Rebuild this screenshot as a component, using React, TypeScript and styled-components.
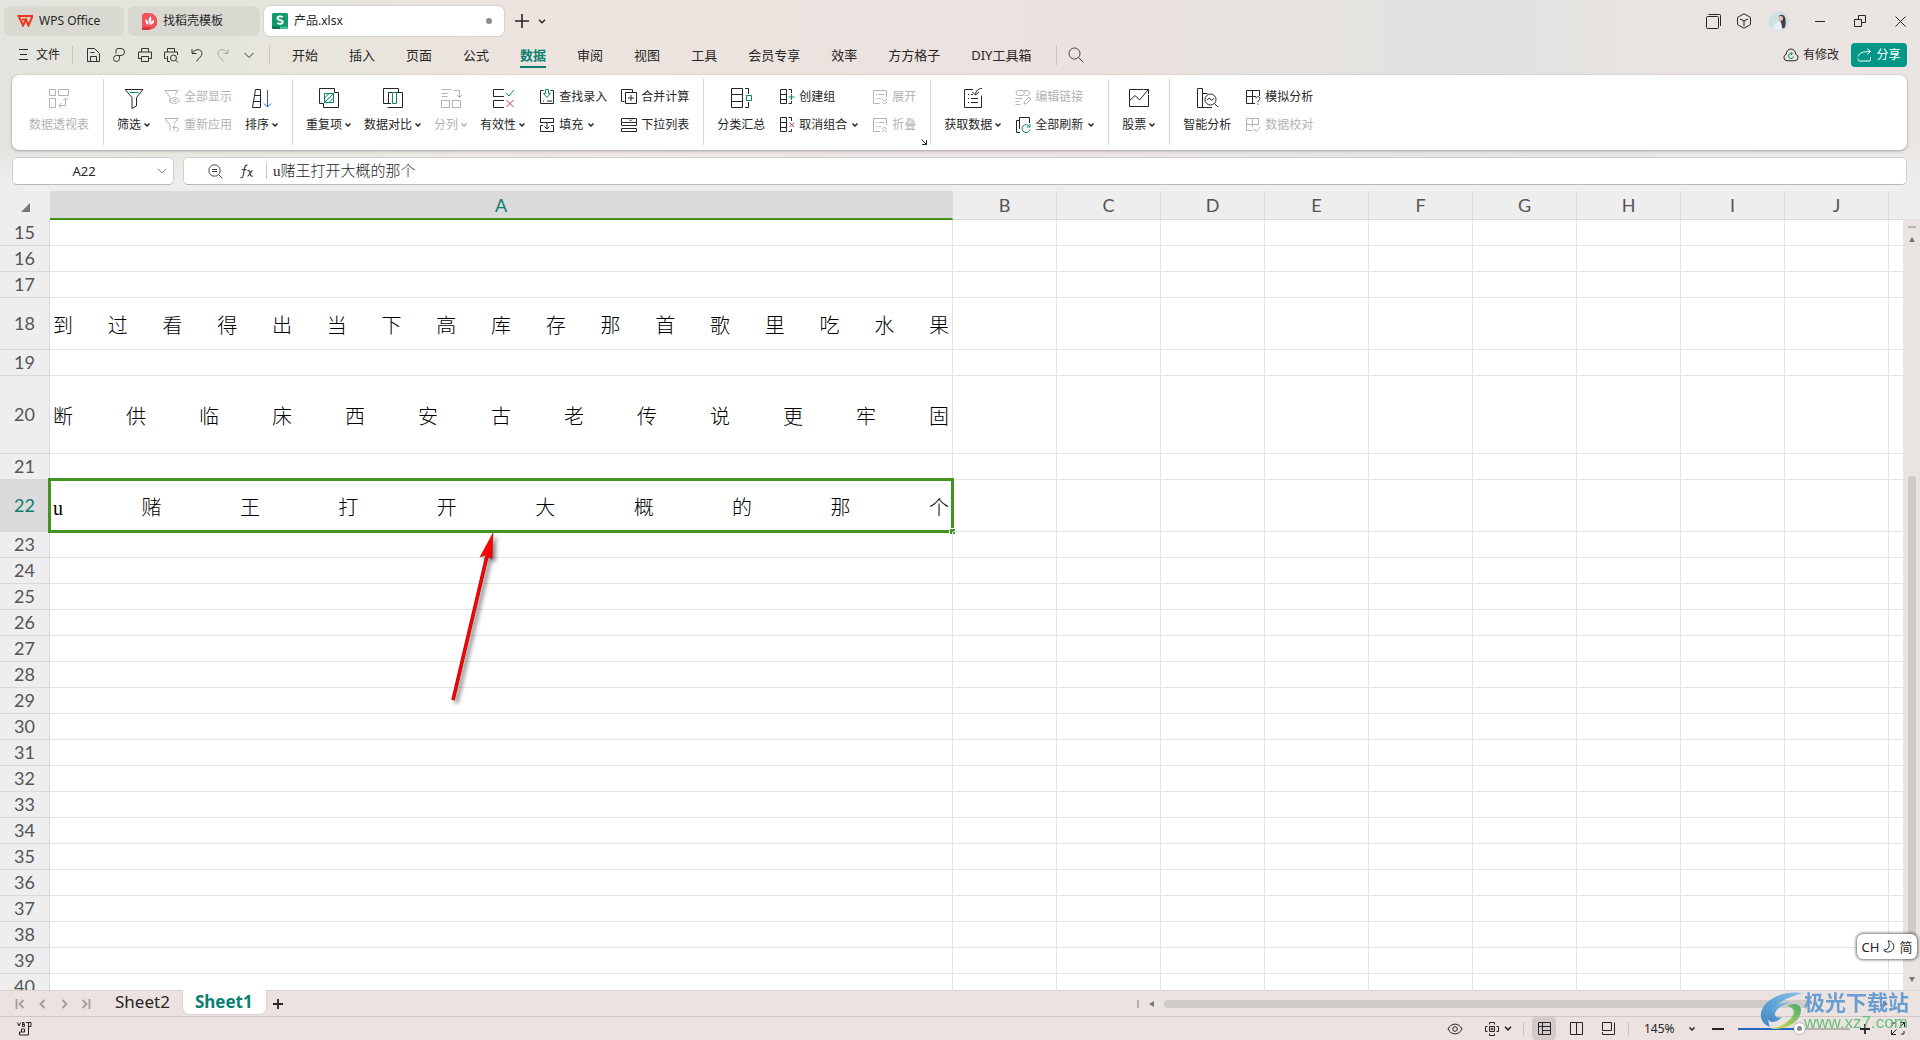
import React, { useState } from "react";
import styled, { createGlobalStyle, css } from "styled-components";

const ui = `"Noto Sans", "Noto Sans CJK SC", sans-serif`;
const green = "#0a8070";

const Global = createGlobalStyle`
  *, *::before, *::after { box-sizing: border-box; }
  body { margin: 0; font-family: ${ui}; font-size: 12px; line-height: 16px; color: #262626; }
  button, input, select { font: inherit; color: inherit; background: none; border: 0; padding: 0; margin: 0; outline: 0; }
`;

/* ---------- frame ---------- */

const Shell = styled.div`
  position: relative;
  display: flex;
  flex-direction: column;
  height: 100vh;
  overflow: hidden;
  background: #ece2e0;
`;

const Head = styled.header`
  display: flex;
  flex-direction: column;
  padding-bottom: 6px;
  background: linear-gradient(180deg, rgba(238, 238, 238, 0) 74%, #eeeeee 98%),
    linear-gradient(90deg, #e4e3de 0, #e5e5db 9%, #e8e5dc 18%, #ede4df 27%, #ece2df 45%, #ece1df 57%, #e8e3e0 63%, #e2e2e0 78%, #e9e4e1 87%, #eae5e2 100%);
`;

const Icon = styled.svg`
  flex: none;
  display: block;
  fill: none;
  stroke: currentColor;
  stroke-width: 1;
`;

const IconButton = styled.button<{ $w?: number; $tone?: string }>`
  flex: none;
  display: flex;
  align-items: center;
  justify-content: center;
  width: ${(p) => p.$w ?? 26}px;
  height: 26px;
  color: ${(p) => p.$tone ?? "#262626"};
`;

/* ---------- title bar ---------- */

const TitleBar = styled.div`
  display: flex;
  align-items: center;
  height: 37px;
  padding: 6px 0 1px 4px;
`;

const FileTab = styled.button<{ $w: number; $pad: number; $active?: boolean }>`
  flex: none;
  display: flex;
  align-items: center;
  gap: 6px;
  width: ${(p) => p.$w}px;
  height: 30px;
  margin-right: 4px;
  padding: 0 12px 0 ${(p) => p.$pad}px;
  border-radius: 6px;
  background: ${(p) => (p.$active ? "#fff" : "#d9d9d2")};
  box-shadow: ${(p) => (p.$active ? "0 0 2px rgba(0,0,0,.25)" : "none")};
`;

const Dirty = styled.span`
  width: 6px;
  height: 6px;
  margin-left: auto;
  border-radius: 50%;
  background: #8c8c8c;
`;

const WindowButtons = styled.div`
  display: flex;
  align-items: center;
  margin-left: auto;
`;

/* ---------- menu ---------- */

const MenuBar = styled.div`
  display: flex;
  align-items: center;
  height: 38px;
  padding: 0 13px 2px 19px;
`;

const FileMenu = styled.button`
  display: flex;
  align-items: center;
  gap: 8px;
  margin-right: 12px;
`;

const Divider = styled.span<{ $h?: number }>`
  flex: none;
  width: 1px;
  height: ${(p) => p.$h ?? 18}px;
  background: #c9c4bf;
`;

const QuickTools = styled.div`
  display: flex;
  align-items: center;
  padding: 0 7px;
`;

const MenuTabs = styled.nav`
  display: flex;
  align-items: center;
  gap: 31px;
  padding: 0 25px 0 22px;
`;

const MenuTab = styled.button<{ $active?: boolean }>`
  flex: none;
  height: 26px;
  padding-top: 2px;
  font-size: 13px;
  white-space: nowrap;
  border-bottom: 2px solid ${(p) => (p.$active ? green : "transparent")};
  ${(p) => p.$active && css`color: ${green}; font-weight: 700;`}
`;

const MenuRight = styled.div`
  display: flex;
  align-items: center;
  gap: 12px;
  margin-left: auto;
`;

const Modified = styled.button`
  display: flex;
  align-items: center;
  gap: 4px;
`;

const Share = styled.button`
  display: flex;
  align-items: center;
  justify-content: center;
  gap: 4px;
  width: 56px;
  height: 24px;
  border-radius: 4px;
  color: #fff;
  background: #009688;
`;

/* ---------- ribbon ---------- */

const Ribbon = styled.div`
  display: flex;
  height: 75px;
  margin: 0 13px 0 12px;
  padding: 4px 0 5px 4px;
  border-radius: 7px;
  background: #fff;
  box-shadow: 0 1px 3px rgba(0, 0, 0, 0.28), 0 0 1px rgba(0, 0, 0, 0.3);
`;

const Group = styled.div`
  position: relative;
  flex: none;
  display: flex;
  gap: 13px;
  padding: 0 14px 0 13px;
  border-right: 1px solid #d6d6d6;
  &:last-child { border-right: 0; }
`;

const Large = styled.button<{ $off?: boolean }>`
  display: flex;
  flex-direction: column;
  align-items: center;
  gap: 7px;
  padding-top: 7px;
  white-space: nowrap;
  color: ${(p) => (p.$off ? "#b3b3b3" : "#262626")};
`;

const Label = styled.span<{ $gap?: number }>`
  display: flex;
  align-items: center;
  gap: ${(p) => p.$gap ?? 3}px;
`;

const Stack = styled.div`
  display: flex;
  flex-direction: column;
  padding: 4px 0 0 1px;
`;

const Small = styled.button<{ $off?: boolean }>`
  display: flex;
  align-items: center;
  gap: 4px;
  height: 28px;
  white-space: nowrap;
  color: ${(p) => (p.$off ? "#b3b3b3" : "#262626")};
`;

const Launcher = styled.button`
  position: absolute;
  right: 3px;
  bottom: 0;
`;

/* ---------- formula bar ---------- */

const FormulaRow = styled.div`
  display: flex;
  gap: 9px;
  padding: 7px 13px 0 12px;
`;

const NameBox = styled.div`
  flex: 0 0 162px;
  min-width: 0;
  display: flex;
  align-items: center;
  height: 28px;
  padding-right: 4px;
  border: 1px solid #d3d1cf;
  border-bottom-color: #b9b8b6;
  border-radius: 5px;
  background: #fff;
`;

const FormulaBox = styled(NameBox)`
  flex: 1;
  padding-left: 10px;
`;

const FormulaDivider = styled(Divider)`
  margin-left: 10px;
`;

const NameInput = styled.input`
  flex: 1;
  min-width: 0;
  text-align: center;
  font-size: 13px;
`;

const FormulaInput = styled.input`
  flex: 1;
  height: 24px;
  padding: 0 8px 3px 6px;
  font-size: 15px;
  font-family: "Liberation Serif", "Noto Sans CJK SC", serif;
  font-weight: 300;
`;

/* ---------- grid ---------- */

const GridArea = styled.main`
  position: relative;
  flex: 1;
  min-height: 0;
  display: flex;
  background: #eeeeee;
`;

const GridClip = styled.div`
  flex: 1;
  min-width: 0;
  overflow: hidden;
`;

const Sheet = styled.table`
  width: 100%;
  table-layout: fixed;
  border-collapse: separate;
  border-spacing: 0;
  background: #fff;
`;

const Col = styled.col<{ $w?: number }>`
  width: ${(p) => (p.$w ? `${p.$w}px` : "auto")};
`;

const HeadCell = styled.th<{ $on?: boolean }>`
  height: 29px;
  padding: 0;
  font: 400 18px/24px Lato, sans-serif;
  color: ${(p) => (p.$on ? green : "#555")};
  background: ${(p) => (p.$on ? "#dbdbdb" : "#eee")};
  border-right: 1px solid #d9d9d9;
  border-bottom: ${(p) => (p.$on ? "2px solid #43931f" : "1px solid #d9d9d9")};
  &:first-child { border-color: transparent; }
  &:last-child { border-right: 0; }
`;

const CornerMark = styled(Icon)`
  margin: 4px 0 0 21px;
`;

const RowHead = styled.th<{ $h: number; $on?: boolean }>`
  height: ${(p) => p.$h}px;
  padding: 0 0 2px;
  font: 400 18px/20px Lato, sans-serif;
  color: ${(p) => (p.$on ? green : "#555")};
  background: ${(p) => (p.$on ? "#dbdbdb" : "#eee")};
  border-right: 1px solid #d9d9d9;
  border-bottom: 1px solid #d9d9d9;
`;

const Cell = styled.td<{ $on?: boolean }>`
  position: relative;
  padding: 4px 3px 0;
  border-right: 1px solid #e3e3e3;
  border-bottom: 1px solid #e3e3e3;
  font: 300 20px/20px "Liberation Serif", "Noto Sans CJK SC", serif;
  color: #000;
  text-align: justify;
  text-align-last: justify;
  &:last-child { border-right: 0; }
  ${(p) =>
    p.$on &&
    css`
      &::before {
        content: "";
        position: absolute;
        inset: -2px;
        border: 3px solid #43931f;
      }
      &::after {
        content: "";
        position: absolute;
        right: -4px;
        bottom: -4px;
        width: 7px;
        height: 7px;
        border: 1px solid #fff;
        background: #43931f;
      }
    `}
`;

const VScroll = styled.div`
  flex: none;
  display: flex;
  flex-direction: column;
  align-items: center;
  width: 17px;
  margin-top: 28px;
  padding-top: 7px;
  background: #e9e3e1;
  color: #777;
`;

const SplitBar = styled.span<{ $vertical?: boolean }>`
  flex: none;
  width: ${(p) => (p.$vertical ? 2 : 8)}px;
  height: ${(p) => (p.$vertical ? 8 : 2)}px;
  background: #b7b2b0;
`;

const ArrowButton = styled.button`
  flex: none;
  display: flex;
  align-items: center;
  justify-content: center;
  min-width: 5px;
  height: 10px;
  margin: 6px 0;
`;

const VTrack = styled.div`
  flex: 1;
  display: flex;
  flex-direction: column;
  width: 8px;
  padding-bottom: 13px;
`;

const VThumb = styled.span`
  height: 68%;
  margin-top: auto;
  border-radius: 4px;
  background: #cfcbc8;
`;

const Annotation = styled.svg`
  position: absolute;
  left: 440px;
  top: 339px;
  overflow: visible;
  filter: drop-shadow(3px 3px 2px rgba(0, 0, 0, 0.5));
`;

const ImeBadge = styled.div`
  position: absolute;
  right: 3px;
  bottom: 31px;
  display: flex;
  align-items: center;
  justify-content: center;
  gap: 4px;
  width: 60px;
  height: 25px;
  border-radius: 6px;
  background: #fff;
  font-size: 13px;
  box-shadow: 0 0 3px 1px rgba(0, 0, 0, 0.55);
`;

/* ---------- bottom ---------- */

const SheetBar = styled.div`
  display: flex;
  align-items: center;
  height: 27px;
  border-top: 1px solid #d6d2d0;
  border-bottom: 1px solid #cfc6c5;
  padding-left: 9px;
`;

const SheetTab = styled.button<{ $active?: boolean }>`
  align-self: flex-start;
  height: 24px;
  margin-top: -1px;
  padding: 0 13px 0 12px;
  font-size: 17px;
  line-height: 24px;
  ${(p) =>
    p.$active &&
    css`
      border-radius: 0 0 6px 6px;
      background: #fff;
      color: ${green};
      font-weight: 700;
      box-shadow: 0 0 2px rgba(0, 0, 0, 0.2);
    `}
`;

const Spacer = styled.span<{ $w: number }>`
  flex: none;
  width: ${(p) => p.$w}px;
`;

const HScroll = styled.div`
  display: flex;
  align-items: center;
  gap: 10px;
  width: 41%;
  margin-left: auto;
  padding-right: 32px;
  color: #777;
`;

const HTrack = styled.div`
  flex: 1;
  height: 8px;
`;

const HThumb = styled.span`
  display: block;
  width: 91%;
  height: 8px;
  border-radius: 4px;
  background: #cfcbc8;
`;

const StatusBar = styled.footer`
  display: flex;
  align-items: center;
  justify-content: space-between;
  height: 23px;
  padding-left: 11px;
`;

const StatusTools = styled.div`
  display: flex;
  align-items: center;
`;

const ViewButton = styled.button<{ $active?: boolean }>`
  display: flex;
  align-items: center;
  justify-content: center;
  width: 24px;
  height: 23px;
  margin: 0 4px;
  border-radius: 4px;
  background: ${(p) => (p.$active ? "#d3cbc9" : "transparent")};
`;

const ZoomSelect = styled.select`
  appearance: none;
  width: 38px;
  margin-left: 15px;
`;

const Slider = styled.input`
  appearance: none;
  width: 112px;
  height: 12px;
  margin: 0 4px;
  background: linear-gradient(90deg, #2864c6 0 60px, #b9b1af 60px) center / 100% 2px no-repeat;
  &::-webkit-slider-thumb {
    appearance: none;
    width: 11px;
    height: 11px;
    border: 3px solid #fff;
    border-radius: 50%;
    background: #888;
    box-shadow: 0 0 2px rgba(0, 0, 0, 0.5);
  }
`;

const Watermark = styled.div`
  position: absolute;
  right: 11px;
  bottom: 8px;
  display: flex;
  align-items: center;
  opacity: 0.9;
  pointer-events: none;
`;

const WatermarkText = styled.div`
  display: flex;
  flex-direction: column;
  font: 700 21px/24px "Noto Sans CJK SC", sans-serif;
  color: #5b97d2;
  span { font: 400 17px/19px "Liberation Sans", sans-serif; color: #56bd72; }
`;

/* ---------- drawings ---------- */

const Chevron = ({ big = false }: { big?: boolean }) =>
  big ? (
    <Icon width="10" height="6" viewBox="0 0 10 6"><path d="M1 .8l4 4 4-4" /></Icon>
  ) : (
    <Icon width="6" height="4" viewBox="0 0 6 4" style={{ strokeWidth: 1.5 }}><path d="M.5.5L3 3 5.5.5" /></Icon>
  );

const G = "#0b8a62";
const R = "#d0305a";

const big: Record<string, React.ReactNode> = {
  pivot: <path d="M2.5 3.5h6v6h-6zM11.5 3.5h10v6h-10zM2.5 12.5h6v9h-6zM12 19.5h6.5v-7M16 14.5l2.5-2.5 2.5 2.5M14.5 17L12 19.5l2.5 2.5" />,
  funnel: <><path d="M3 3.5h18l-6.500 8V20l-4.500 2.500V11.500L3.500 4" /><path d="M7.500 6.500h9" stroke={G} /></>,
  sort: <><path d="M5.500 3.500h5v18h-8zM5 9.500h5.500M3.500 15.500h7" /><path d="M17.500 4v17M14 17.500l3.500 3.500 3.500-3.500" stroke="#2a5bd7" /></>,
  dup: <><path d="M6.500 17.500h-4v-15h15v4M21.500 6.500v15h-15v-4M17.500 6.500h4" /><path d="M7.500 7.500h9v9h-9zM7.500 12l4.500-4.500M7.500 16.500l9-9M12 16.500l4.500-4.500" stroke={G} /></>,
  compare: <><path d="M10 17.500H2.500v-15h15v4M21.500 6.500v15h-15M7.500 6.500H11M7.500 6.500v11M14 6.500h7.500" /><path d="M11.500 6.500h4v11h-4z" stroke={G} /></>,
  split: <path d="M2.500 3.500h10M2.500 7.500h6M2.500 10.500h6M15 4.500h5.500v7M18 9l2.500 2.500L23 9M2.500 14.500h8v7h-8zM13.500 14.500h8v7h-8z" />,
  valid: <><path d="M13 3.500H2.500v7H13M13 14.500H2.500v7H13" /><path d="M15 7l3 3 5-6" stroke={G} /><path d="M15.500 14l7 7M22.500 14l-7 7" stroke={R} /></>,
  subtotal: <><path d="M2.500 2.500h11v19h-11zM2.500 8.500h11M2.500 15.500h11M16 2.500h3.500V8M19.500 16v5.500H16" /><path d="M17.500 9.500h5v5h-5z" stroke={G} /></>,
  getdata: <path d="M12 3.500H3.500v18h17v-12M7 12.500h1M10 12.500h7M7 16.500h1M10 16.500h7M7 8.500h1M10 8.500h2M21 2.500c-4 0-6 2-6.500 6M11.500 6l3 3 3.500-3" />,
  stock: <path d="M16 3.500H2.500v17h19V9M2.500 14.500l5.500-5 4.500 4.500L21 4M16.500 3.500h5v5" />,
  smart: <><path d="M2.500 2.500h5v19h-5zM7.500 7.500h5M7.500 21.500H17" /><circle cx="15.500" cy="13.500" r="5.500" /><path d="M19.500 17.500l3.500 3.500M12 14l2.500-2 2 2.500 2.500-2" /></>,
};

const small: Record<string, React.ReactNode> = {
  funnelEye: <><path d="M6 14V8L1 1.500h13L11 6" /><path d="M6 11.500c2-4 7-4 9.500 0-2.500 4-7.500 4-9.500 0z" /><circle cx="10.800" cy="11.500" r="1.300" /></>,
  funnelRe: <><path d="M6 14V8L1 1.500h13L10 7" /><path d="M9 10.500h3.500a2 2 0 010 4M11 8l-2.500 2.500L11 13" /></>,
  lookup: <><path d="M4.500 1.500h-3v13h13v-13h-3M8 12h5M4 12h1" /><path d="M6.500.500h3v4h2L8 8.500l-3.500-4h2z" stroke={G} /></>,
  fill: <path d="M1.500 6V1.500h13V6M1.500 5.500h13M4 8.500H1.500v6h13v-6H12M8 5.500V12M5.500 9.500L8 12l2.500-2.500" />,
  merge: <path d="M3.500 12.500h-3v-12h11v3M4.500 3.500h11v11h-11zM10 6v6M7 9h6" />,
  dropList: <path d="M.500 1.500h15v4H.500zM.500 8.500h15M.500 5.500v3M15.500 5.500v3M.500 11.500h15v3H.500zM8 2.500l1.500 1.500L11 2.500" />,
  group: <><path d="M1.500.500h6v14h-6zM1.500 5.500h6M1.500 10.500h6M9.500.500H12.500V4M12.500 12v2.500H9.500" /><path d="M12.500 5v6M9.500 8h6" stroke={G} /></>,
  ungroup: <><path d="M1.500.500h6v14h-6zM1.500 5.500h6M1.500 10.500h6M9.500.500H12.500V4M12.500 12v2.500H9.500" /><path d="M10.500 5.500l4.500 4.500M15 5.500l-4.500 4.500" stroke={R} /></>,
  expand: <path d="M8 14.500H1.500v-13h13V8M4 5.500h1M6.500 5.500H12M4 9.500h1M6.500 9.500H9M10 10l2.500 2 2.500-2M10 13l2.500 2 2.500-2" />,
  collapse: <path d="M8 14.500H1.500v-13h13V8M4 5.500h1M6.500 5.500H12M4 9.500h1M6.500 9.500H9M10 12l2.500-2 2.500 2M10 15l2.500-2 2.500 2" />,
  editLink: <path d="M4 1.500h3a2 2 0 010 5H3.500a2.500 2.500 0 010-5M9 1.500h3a2.500 2.500 0 010 5H10M.500 9.500h7M.500 12.500h4M.500 15.500h5M9 15l.500-2.500 4.500-4.500 2 2-4.500 4.500z" />,
  refresh: <><path d="M4.500 12V.500h10V6M4.500 3.500h-3v12H5" /><path d="M14.500 9.500a4 4 0 10.500 3M15 7v3h-3" stroke={G} /></>,
  whatIf: <><path d="M1.500 1.500h13V7M1.500 1.500v13H10M7.500 1.500v13M1.500 7.500H11" /><path d="M11 9.500c0-2.500 4-2.500 4 0 0 1.500-2 1.500-2 3.500M13 14.500v1.200" /></>,
  proof: <path d="M1.500 1.500h12V8M1.500 1.500v12H7M7.500 1.500V10M1.500 7.500h12M8.500 11.500l3 3 4-5" />,
};

type SmallItem = { icon: string; text: string; off?: boolean; more?: boolean };
type Item = { icon?: string; text?: string; off?: boolean; more?: boolean; stack?: SmallItem[] };

const groups: Item[][] = [
  [{ icon: "pivot", text: "数据透视表", off: true }],
  [
    { icon: "funnel", text: "筛选", more: true },
    { stack: [{ icon: "funnelEye", text: "全部显示", off: true }, { icon: "funnelRe", text: "重新应用", off: true }] },
    { icon: "sort", text: "排序", more: true },
  ],
  [
    { icon: "dup", text: "重复项", more: true },
    { icon: "compare", text: "数据对比", more: true },
    { icon: "split", text: "分列", more: true, off: true },
    { icon: "valid", text: "有效性", more: true },
    { stack: [{ icon: "lookup", text: "查找录入" }, { icon: "fill", text: "填充", more: true }] },
    { stack: [{ icon: "merge", text: "合并计算" }, { icon: "dropList", text: "下拉列表" }] },
  ],
  [
    { icon: "subtotal", text: "分类汇总" },
    { stack: [{ icon: "group", text: "创建组" }, { icon: "ungroup", text: "取消组合", more: true }] },
    { stack: [{ icon: "expand", text: "展开", off: true }, { icon: "collapse", text: "折叠", off: true }] },
  ],
  [
    { icon: "getdata", text: "获取数据", more: true },
    { stack: [{ icon: "editLink", text: "编辑链接", off: true }, { icon: "refresh", text: "全部刷新", more: true }] },
  ],
  [{ icon: "stock", text: "股票", more: true }],
  [
    { icon: "smart", text: "智能分析" },
    { stack: [{ icon: "whatIf", text: "模拟分析" }, { icon: "proof", text: "数据校对", off: true }] },
  ],
];

const RibbonItem = ({ item }: { item: Item }) =>
  item.stack ? (
    <Stack>
      {item.stack.map((s) => (
        <Small key={s.text} $off={s.off} disabled={s.off}>
          <Icon width="16" height="16" viewBox="0 0 16 16">{small[s.icon]}</Icon>
          <Label $gap={5}>{s.text}{s.more && <Chevron />}</Label>
        </Small>
      ))}
    </Stack>
  ) : (
    <Large $off={item.off} disabled={item.off}>
      <Icon width="24" height="24" viewBox="0 0 24 24">{big[item.icon!]}</Icon>
      <Label>{item.text}{item.more && <Chevron />}</Label>
    </Large>
  );

const quick: [string, React.ReactNode, boolean?][] = [
  ["保存", <path d="M2.500 1.500h7l5 5v8h-12zM5.500 14.500v-5h6v5M5.500 5.500h4" />],
  ["输出为PDF", <path d="M5 6.500V3.500a2 2 0 012-2h3a3.500 3.500 0 010 7H8.500v3a3 3 0 11-3-3h3" />],
  ["打印", <path d="M4.500 5V1.500h7V5M4.500 11.500h-3V5h13v6.500h-3M4.500 9.500h7v5h-7z" />],
  ["打印预览", <><path d="M4.500 5V1.500h7V5M3.500 11.500h-2V5h13V8M4.500 9v5.500H7" /><circle cx="10.500" cy="11" r="3" /><path d="M12.700 13.200L15 15.500" /></>],
  ["撤消", <path d="M3 2v4.500h4.500M3.500 6C6 1.500 13 1.500 13 6.500c0 3-3 4-5.500 8" />],
  ["恢复", <path d="M13 2v4.500H8.500M12.500 6C10 1.500 3 1.500 3 6.500c0 3 3 4 5.500 8" />, true],
  ["更多", <path d="M3.500 6L8 10.500 12.500 6" />],
];

const tabs = ["开始", "插入", "页面", "公式", "数据", "审阅", "视图", "工具", "会员专享", "效率", "方方格子", "DIY工具箱"];

const columns = ["A", "B", "C", "D", "E", "F", "G", "H", "I", "J"];
const content: Record<number, { h: number; text: string }> = {
  18: { h: 52, text: "到过看得出当下高库存那首歌里吃水果" },
  20: { h: 78, text: "断供临床西安古老传说更牢固" },
  22: { h: 52, text: "u赌王打开大概的那个" },
};
const rows = Array.from({ length: 26 }, (_, i) => i + 15);
const selected = 22;

export default function App() {
  const [formula, setFormula] = useState("u赌王打开大概的那个");
  const [ref, setRef] = useState("A22");
  const [zoom, setZoom] = useState(145);

  return (
    <Shell>
      <Global />
      <Head>
        <TitleBar>
          <FileTab $w={120} $pad={13}>
            <Icon width="16" height="12" viewBox="0 0 16 12" style={{ strokeWidth: 2 }}>
              <path d="M.500 1h15L11.500 10.500 9 4.500 6 10.500 2 1.500M5 4.500h3" stroke="#f0361f" />
            </Icon>
            WPS Office
          </FileTab>
          <FileTab $w={132} $pad={14}>
            <Icon width="15" height="17" viewBox="0 0 15 17">
              <path d="M0 2l2-2h5a8 8 0 010 17H0z" fill="#f2545b" stroke="none" />
              <path d="M0 14h9a5 5 0 01-3 3H0z" fill="#d9363e" stroke="none" />
              <path d="M8.500 3c1.500 3 1 6-1 8C6 8.500 6.500 5 8.500 3zM3.500 6c2 1 3 3 3 6C4 11 3 9 3.500 6zM12 7c.5 2.500-1 4.500-4 5 .2-2.500 1.500-4.500 4-5z" fill="#fff" stroke="none" />
            </Icon>
            找稻壳模板
          </FileTab>
          <FileTab $w={240} $pad={8} $active>
            <Icon width="16" height="16" viewBox="0 0 16 16">
              <rect width="16" height="16" rx="1.500" fill="#13996a" stroke="none" />
              <path d="M0 13.500h16V15l-1 1H1l-1-1z" fill="#0b7350" stroke="none" />
              <path d="M8 13.500h8V15l-1 1H8z" fill="#3fc08d" stroke="none" />
              <path d="M10.800 4.200C9.500 3 5.500 3 5.500 5.200c0 2.600 5.300 1.200 5.300 3.800 0 2.200-4 2.200-5.500.800" stroke="#fff" style={{ strokeWidth: 1.8 }} />
            </Icon>
            产品.xlsx
            <Dirty />
          </FileTab>
          <IconButton $w={28} aria-label="新建">
            <Icon width="14" height="14" viewBox="0 0 14 14" style={{ strokeWidth: 1.6 }}><path d="M7 0v14M0 7h14" /></Icon>
          </IconButton>
          <IconButton $w={12} aria-label="标签列表">
            <Icon width="8" height="5" viewBox="0 0 8 5" style={{ strokeWidth: 1.4 }}><path d="M1 .800l3 3 3-3" /></Icon>
          </IconButton>
          <WindowButtons>
            <IconButton $w={34} aria-label="窗口">
              <Icon width="15" height="15" viewBox="0 0 15 15"><rect x=".5" y="2.5" width="12" height="12" rx="1" /><path d="M2.500.500h11a1 1 0 011 1V12" /></Icon>
            </IconButton>
            <IconButton $w={28} aria-label="工作区">
              <Icon width="16" height="16" viewBox="0 0 16 16"><path d="M8 .800l6.500 3.600v7.200L8 15.200l-6.500-3.600V4.400zM4 6l4 2 4-2M8 8v5" /></Icon>
            </IconButton>
            <IconButton $w={42} aria-label="账号">
              <Icon width="20" height="20" viewBox="0 0 20 20">
                <circle cx="10" cy="10" r="10" fill="#cfdfe6" stroke="none" />
                <path d="M10 5c2-2.500 6-1 6.500 3 .3 3 .5 6-1 9l-3 .500c0-4 0-7-2.500-9z" fill="#4a3a42" stroke="none" />
                <path d="M9.500 6c1-1.500 4-1.500 4.500.500s-1 3.500-2.500 3.500-2.500-2-2-4z" fill="#e3bfb4" stroke="none" />
                <path d="M4 17c1-5 4-7 7-6.500 1.500 2 2 5 2 8-4 1.500-6.500.5-9-1.500z" fill="#e6f1f5" stroke="none" />
              </Icon>
            </IconButton>
            <IconButton $w={40} aria-label="最小化"><Icon width="10" height="3" viewBox="0 0 10 3"><path d="M0 1.500h10" /></Icon></IconButton>
            <IconButton $w={40} aria-label="还原">
              <Icon width="12" height="12" viewBox="0 0 12 12"><path d="M.500 4.500h7v7h-7zM4.500 4.500v-4h7v7H7.500" /></Icon>
            </IconButton>
            <IconButton $w={40} aria-label="关闭"><Icon width="11" height="11" viewBox="0 0 11 11"><path d="M.500.500l10 10M10.500.500l-10 10" /></Icon></IconButton>
          </WindowButtons>
        </TitleBar>

        <MenuBar>
          <FileMenu>
            <Icon width="9" height="12" viewBox="0 0 9 12"><path d="M0 .500h9M1 5.500h7M0 10.500h9" /></Icon>
            文件
          </FileMenu>
          <Divider />
          <QuickTools>
            {quick.map(([name, d, off]) => (
              <IconButton key={name} aria-label={name} disabled={off} $tone={off ? "#aaa8a4" : "#333"}>
                <Icon width="16" height="16" viewBox="0 0 16 16">{d}</Icon>
              </IconButton>
            ))}
          </QuickTools>
          <Divider />
          <MenuTabs>
            {tabs.map((t) => <MenuTab key={t} $active={t === "数据"}>{t}</MenuTab>)}
          </MenuTabs>
          <Divider $h={20} />
          <IconButton $w={38} aria-label="搜索" $tone="#444">
            <Icon width="16" height="16" viewBox="0 0 16 16"><circle cx="6.500" cy="6.500" r="5.500" /><path d="M10.500 10.500l5 5" /></Icon>
          </IconButton>
          <MenuRight>
            <Modified>
              <Icon width="16" height="14" viewBox="0 0 16 14">
                <path d="M4 12.800a3.400 3.400 0 01-.800-6.600C3.500 3 5.500 1 8 1s4.500 2 4.800 5.200a3.400 3.400 0 01-.800 6.600z" />
                <path d="M10.500 8.500a2.500 2.500 0 11-1.500-2.800M8 4.200l1.500 1.500L8 7.200" stroke={G} />
              </Icon>
              有修改
            </Modified>
            <Share>
              <Icon width="15" height="14" viewBox="0 0 15 14"><path d="M1 8.500C2 5 6 3.500 13 3.500M10 .500l3.500 3-3.500 3M1 10.500v1a1.500 1.500 0 001.500 1.500h9.500a1.500 1.500 0 001.500-1.500V9" /></Icon>
              分享
            </Share>
          </MenuRight>
        </MenuBar>

        <Ribbon>
          {groups.map((g, i) => (
            <Group key={i}>
              {g.map((item, j) => <RibbonItem key={j} item={item} />)}
              {i === 3 && (
                <Launcher aria-label="分级显示设置">
                  <Icon width="6" height="6" viewBox="0 0 6 6"><path d="M.500.500l5 5M5.500 1v4.500H1" /></Icon>
                </Launcher>
              )}
            </Group>
          ))}
        </Ribbon>

        <FormulaRow>
          <NameBox>
            <NameInput aria-label="名称框" value={ref} onChange={(e) => setRef(e.target.value)} />
            <IconButton $w={14} aria-label="选择名称" $tone="#777"><Chevron big /></IconButton>
          </NameBox>
          <FormulaBox>
            <IconButton $w={42} aria-label="浏览公式结果" $tone="#444">
              <Icon width="15" height="15" viewBox="0 0 15 15"><circle cx="6.500" cy="6.500" r="5.700" /><path d="M10.800 10.800l3.500 3.500M4 5.500h5M4 7.500h5" /></Icon>
            </IconButton>
            <IconButton $w={20} aria-label="插入函数" $tone="#444">
              <Icon width="15" height="15" viewBox="0 0 16 16" style={{ strokeWidth: 1.3 }}><path d="M9 1.500c-2-1-2.500.500-3 3L4.500 12c-.500 2.500-1.500 3-3 2.500M3 6h5M9 7c2-1 2.500 1 3 3s1 4 2.500 2.500M14.500 7c-2 0-3.500 6-5.500 6" /></Icon>
            </IconButton>
            <FormulaDivider $h={16} />
            <FormulaInput aria-label="编辑栏" value={formula} onChange={(e) => setFormula(e.target.value)} />
          </FormulaBox>
        </FormulaRow>
      </Head>

      <GridArea>
        <GridClip>
          <Sheet>
            <colgroup>
              <Col $w={50} />
              <Col $w={903} />
              {columns.slice(1).map((c) => <Col key={c} $w={104} />)}
              <Col />
            </colgroup>
            <thead>
              <tr>
                <HeadCell aria-label="全选">
                  <CornerMark width="9" height="9" viewBox="0 0 9 9"><path d="M9 0v9H0z" fill="#777" stroke="none" /></CornerMark>
                </HeadCell>
                {columns.map((c) => <HeadCell key={c} scope="col" $on={c === "A"}>{c}</HeadCell>)}
                <HeadCell />
              </tr>
            </thead>
            <tbody>
              {rows.map((r) => (
                <tr key={r}>
                  <RowHead scope="row" $h={content[r]?.h ?? 26} $on={r === selected}>{r}</RowHead>
                  <Cell $on={r === selected}>{content[r]?.text}</Cell>
                  {columns.slice(1).map((c) => <Cell key={c} />)}
                  <Cell />
                </tr>
              ))}
            </tbody>
          </Sheet>
        </GridClip>
        <VScroll>
          <SplitBar />
          <ArrowButton aria-label="向上滚动"><Icon width="6" height="5" viewBox="0 0 6 5"><path d="M3 0l3 5H0z" fill="currentColor" stroke="none" /></Icon></ArrowButton>
          <VTrack><VThumb /></VTrack>
          <ArrowButton aria-label="向下滚动"><Icon width="6" height="5" viewBox="0 0 6 5"><path d="M3 5l3-5H0z" fill="currentColor" stroke="none" /></Icon></ArrowButton>
        </VScroll>
        <Annotation width="60" height="180" viewBox="0 0 60 180">
          <path d="M13 170L47 26" stroke="#a01010" strokeWidth="3.500" />
          <path d="M13 170L47 26" stroke="#ff0000" strokeWidth="2.500" />
          <path d="M53 3L40 27l6-2 6 4z" fill="#ff0000" stroke="#a01010" strokeWidth=".500" />
        </Annotation>
        <ImeBadge>
          CH
          <Icon width="12" height="13" viewBox="0 0 12 13"><path d="M5 .800c8 1 7.500 11.500-.500 11.200C2.500 12 1 11 .800 9.800 6 10.500 7.500 5 5 .800z" /></Icon>
          简
        </ImeBadge>
      </GridArea>

      <SheetBar>
        {[
          ["第一个", "M1.500 1v10M8.500 2L4.500 6l4 4"],
          ["上一个", "M7.500 2L3.500 6l4 4"],
          ["下一个", "M3.500 2l4 4-4 4"],
          ["最后一个", "M1.500 2l4 4-4 4M8.500 1v10"],
        ].map(([name, d]) => (
          <IconButton key={name} $w={22} aria-label={name} $tone="#a39c9a">
            <Icon width="10" height="12" viewBox="0 0 10 12" style={{ strokeWidth: 1.8 }}><path d={d} /></Icon>
          </IconButton>
        ))}
        <Spacer $w={6} />
        <SheetTab>Sheet2</SheetTab>
        <SheetTab $active>Sheet1</SheetTab>
        <IconButton $w={24} aria-label="新建工作表">
          <Icon width="10" height="10" viewBox="0 0 10 10" style={{ strokeWidth: 1.8 }}><path d="M5 0v10M0 5h10" /></Icon>
        </IconButton>
        <HScroll>
          <SplitBar $vertical />
          <ArrowButton aria-label="向左滚动"><Icon width="5" height="6" viewBox="0 0 5 6"><path d="M0 3l5-3v6z" fill="currentColor" stroke="none" /></Icon></ArrowButton>
          <HTrack><HThumb /></HTrack>
          <ArrowButton aria-label="向右滚动"><Icon width="5" height="6" viewBox="0 0 5 6"><path d="M5 3L0 0v6z" fill="currentColor" stroke="none" /></Icon></ArrowButton>
        </HScroll>
      </SheetBar>

      <StatusBar>
        <IconButton aria-label="宏">
          <Icon width="15" height="14" viewBox="0 0 15 14"><path d="M.500.500L2 4 3.500.500M5.500.500v4h2v-2h-2 1.500v-2zM9 .500h5v4h-2.500v8.500h-9v-3M11.500.500v4M2.500 10h5V7h-3v3" /></Icon>
        </IconButton>
        <StatusTools>
          <IconButton $w={36} aria-label="护眼模式">
            <Icon width="16" height="12" viewBox="0 0 16 12"><path d="M1 6c3-6.500 11-6.500 14 0-3 6.500-11 6.500-14 0z" /><circle cx="8" cy="6" r="2.300" /></Icon>
          </IconButton>
          <IconButton $w={50} aria-label="阅读模式">
            <Label $gap={5}>
              <Icon width="14" height="14" viewBox="0 0 14 14"><path d="M4.500 4.500h5v5h-5zM4.500 2.500v-2h5v2M4.500 11.500v2h5v-2M2.500 4.500h-2v5h2M11.500 4.500h2v5h-2M7 5.500v3M5.500 7h3" /></Icon>
              <Icon width="8" height="5" viewBox="0 0 8 5" style={{ strokeWidth: 1.6 }}><path d="M1 .800l3 3 3-3" /></Icon>
            </Label>
          </IconButton>
          <Divider $h={14} />
          <Spacer $w={4} />
          <ViewButton $active aria-label="普通视图"><Icon width="13" height="13" viewBox="0 0 13 13"><path d="M.500.500h12v12H.500zM.500 4.500h12M4.500.500v12M4.500 8.500h8" /></Icon></ViewButton>
          <ViewButton aria-label="页面布局"><Icon width="13" height="13" viewBox="0 0 13 13"><path d="M.500.500h12v12H.500zM6.500.500v12" /></Icon></ViewButton>
          <ViewButton aria-label="分页预览"><Icon width="13" height="13" viewBox="0 0 13 13"><path d="M.500.500h9v8h-9zM12.500.500v12H.500V10" /></Icon></ViewButton>
          <Spacer $w={4} />
          <Divider $h={14} />
          <ZoomSelect aria-label="显示比例" value={zoom} onChange={(e) => setZoom(Number(e.target.value))}>
            {[75, 100, 145, 200].map((z) => <option key={z} value={z}>{z}%</option>)}
          </ZoomSelect>
          <IconButton $w={20} aria-label="更多比例"><Chevron /></IconButton>
          <IconButton $w={32} aria-label="缩小"><Icon width="12" height="2" viewBox="0 0 12 2" style={{ strokeWidth: 2 }}><path d="M0 1h12" /></Icon></IconButton>
          <Slider type="range" aria-label="缩放" min={10} max={255} value={zoom} onChange={(e) => setZoom(Number(e.target.value))} />
          <IconButton $w={22} aria-label="放大"><Icon width="10" height="10" viewBox="0 0 10 10" style={{ strokeWidth: 1.8 }}><path d="M5 0v10M0 5h10" /></Icon></IconButton>
          <IconButton $w={44} aria-label="全屏"><Icon width="14" height="13" viewBox="0 0 14 13"><path d="M9 .500h4.500V5M13.500.500L8.500 5.500M5 12.500H.500V8M.500 12.500l5-5M1 4V1h3M13 9v3h-3" /></Icon></IconButton>
        </StatusTools>
      </StatusBar>

      <Watermark aria-hidden>
        <Icon width="44" height="42" viewBox="0 0 44 42">
          <defs>
            <linearGradient id="blue" x1="0" y1="1" x2="1" y2="0"><stop offset="0" stopColor="#2f7cc4" /><stop offset="1" stopColor="#7cc4ea" /></linearGradient>
            <linearGradient id="leaf" x1="0" y1="1" x2="1" y2="0"><stop offset="0" stopColor="#e3e04a" /><stop offset="1" stopColor="#35a865" /></linearGradient>
          </defs>
          <path d="M43 3C22 0 3 10 1 23c-1 7 3 12 9 14C5 27 12 11 43 3z" fill="url(#blue)" stroke="none" />
          <path d="M32 12C17 11 7 20 8 28c1 6 9 5 14-1-4 1-7 0-7-3 0-5 8-10 17-12z" fill="url(#blue)" stroke="none" />
          <path d="M27 16c6-4 14-2 14 4 0 11-13 20-31 19 12-2 20-8 23-14 2-4 0-8-6-9z" fill="url(#leaf)" stroke="none" />
        </Icon>
        <WatermarkText>极光下载站<span>www.xz7.com</span></WatermarkText>
      </Watermark>
    </Shell>
  );
}
